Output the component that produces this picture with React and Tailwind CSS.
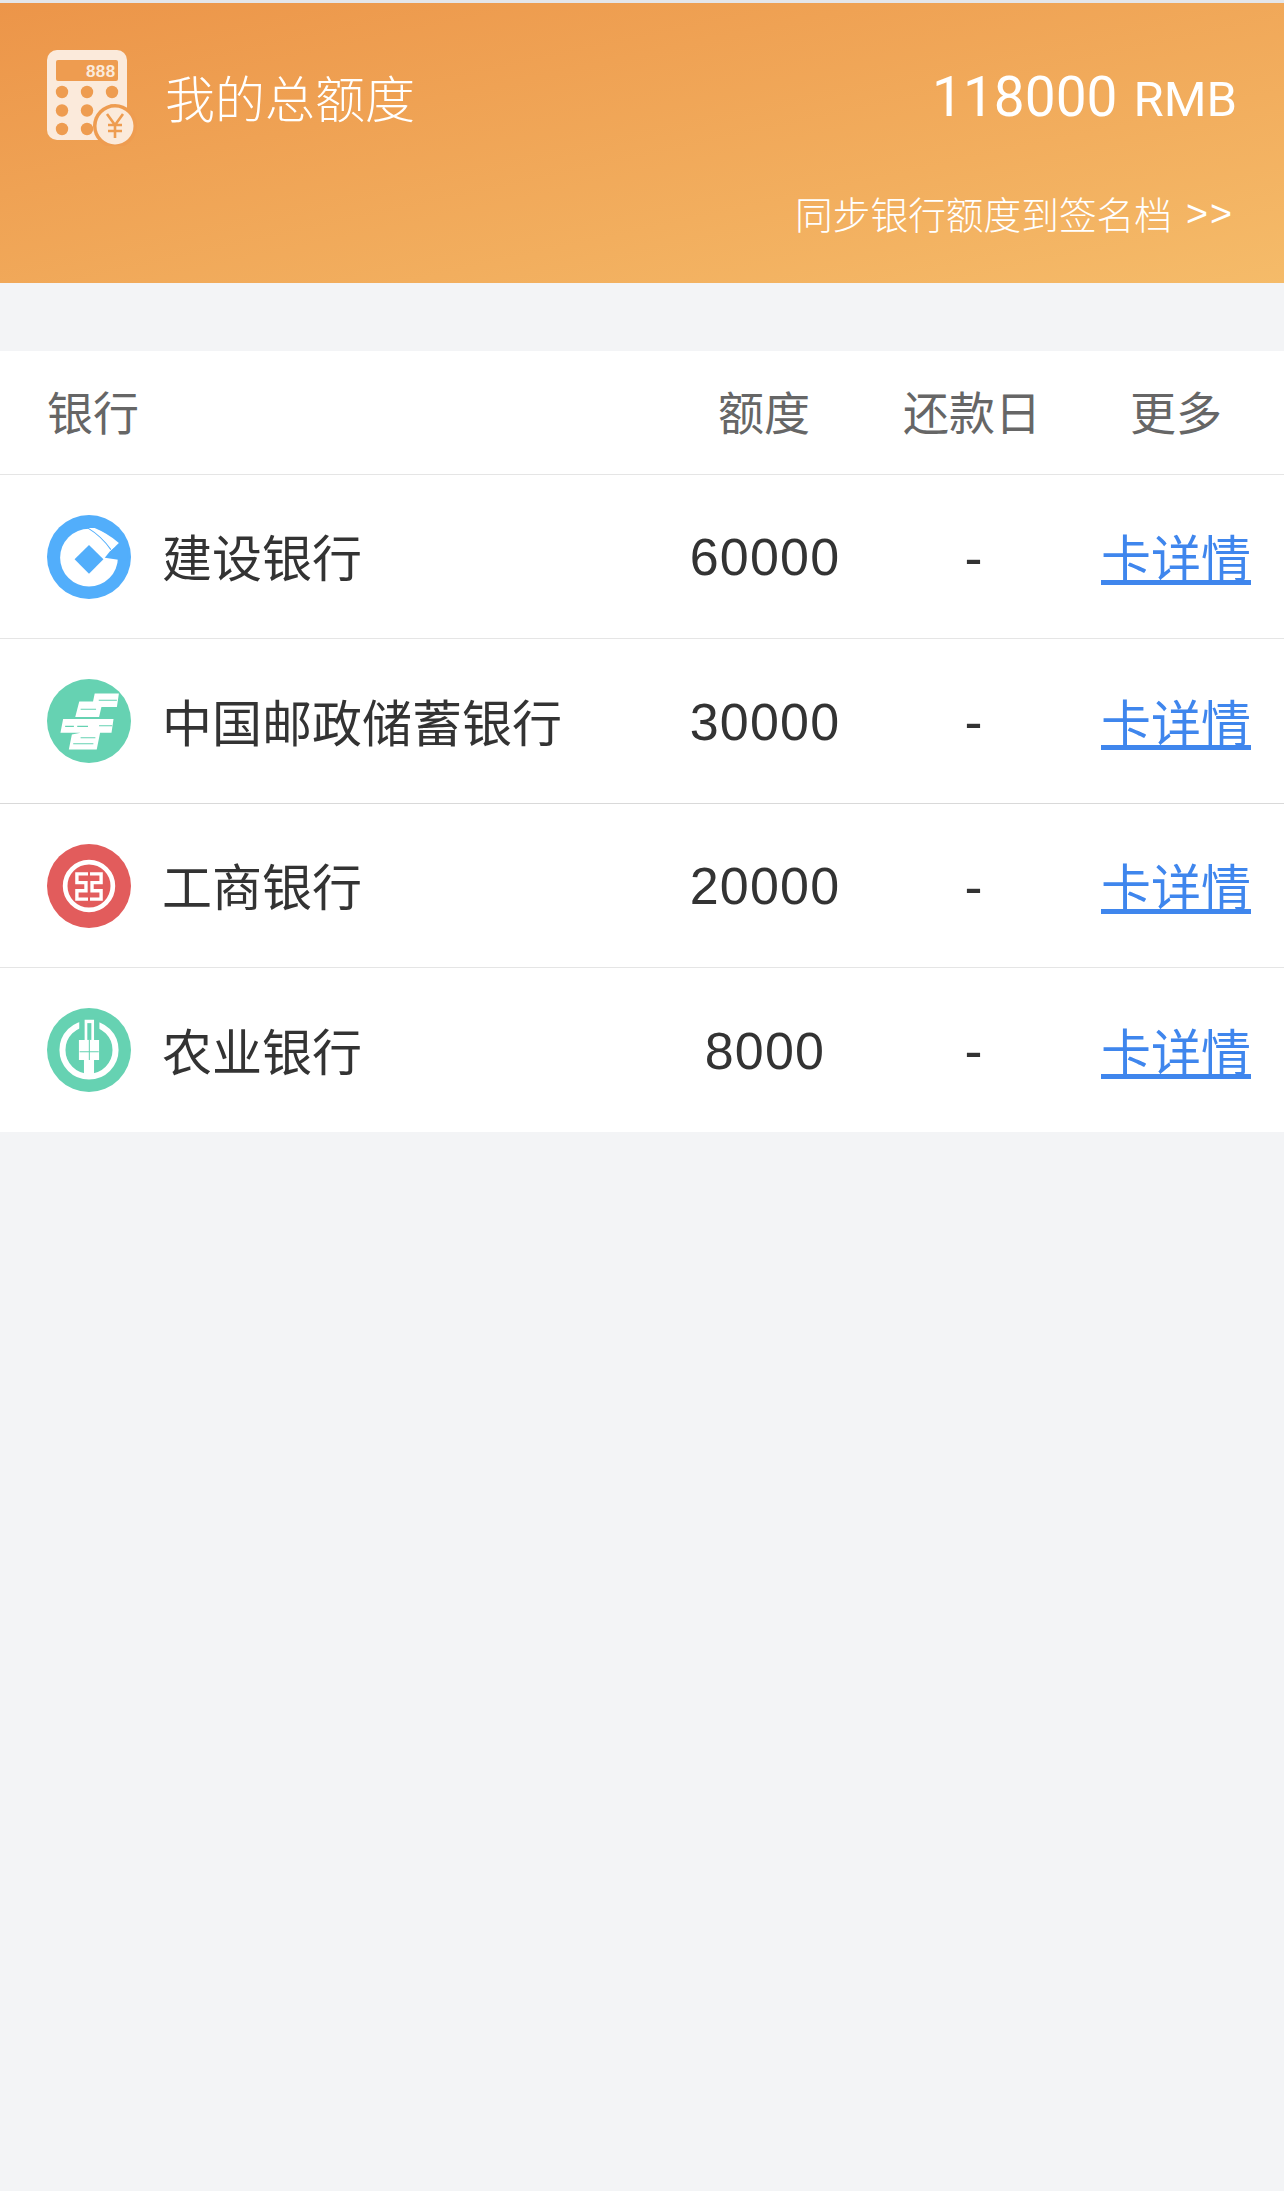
const cjk = { fontFamily: '"Noto Sans CJK SC", sans-serif' };
const num = { fontFamily: '"Liberation Sans", "Noto Sans CJK SC", sans-serif' };

function CalcIcon() {
  return (
    <svg width="90" height="96" viewBox="0 0 90 96" className="shrink-0">
      <rect x="0" y="0" width="80" height="90" rx="10" fill="#fbeadb" />
      <rect x="9" y="10" width="62" height="21" rx="2" fill="#ee9c50" />
      <text x="39" y="27" fill="#fbeadb" fontSize="17" fontFamily="Liberation Sans" fontWeight="700" letterSpacing="0.4">888</text>
      {[0, 1, 2].flatMap((r) =>
        [0, 1, 2].map((c) => (
          <circle key={`${r}-${c}`} cx={15 + c * 25} cy={42 + r * 18.5} r="6.2" fill="#ee9c50" />
        ))
      )}
      <circle cx="68" cy="76" r="22" fill="#ee9c50" />
      <circle cx="68" cy="76" r="18.5" fill="#fbeadb" />
      <path d="M60 64l8 11 8-11M61 75h14M61 81h14M68 75v13" fill="none" stroke="#ee9c50" strokeWidth="2.6" />
    </svg>
  );
}

function Disc({ fill, cy = 170, children }) {
  return (
    <svg width="84" height="84" viewBox={`50 ${cy - 125} 250 250`}>
      <circle cx="175" cy={cy} r="125" fill={fill} />
      {children}
    </svg>
  );
}

function CcbIcon() {
  const b = '#52aefb';
  return (
    <Disc fill={b}>
      <circle cx="175" cy="172" r="86" fill="#fff" />
      <path d="M238 152 L264 128 L290 128 L290 180 L262 178 L222 172 Z" fill={b} />
      <path d="M172 84 L192 84 Q230 100 264 128 L238 152 Z" fill="#fff" />
      <path d="M172 84 Q212 108 240 148" fill="none" stroke={b} strokeWidth="3" />
      <path d="M175 134 L218 177 L175 220 L132 177 Z" fill={b} />
    </Disc>
  );
}

function PsbcIcon() {
  const g = '#66d2b2';
  return (
    <Disc fill={g}>
      <path d="M192 88 L264 88 L258 128 L212 128 L205 158 L134 158 L146 112 L187 112 Z" fill="#fff" />
      <path d="M98 164 L248 164 L242 205 L208 205 L198 255 L115 255 L124 210 L150 205 L90 205 Z" fill="#fff" />
      <path d="M204 108 L258 108 M150 135 L196 135 M104 186 L130 186 M140 186 L172 186 M205 184 L244 184 M128 238 L188 238 M150 220 L194 220" fill="none" stroke={g} strokeWidth="3" />
    </Disc>
  );
}

function IcbcIcon() {
  const w = '#fff';
  return (
    <Disc fill="#e25c5c" cy={167}>
      <circle cx="175" cy="167" r="71" fill="none" stroke={w} strokeWidth="14" />
      <path
        d="M172 131 H139 V157 H166 V181 H139 V206 H172 M178 131 H211 V157 H184 V181 H211 V206 H178"
        fill="none"
        stroke={w}
        strokeWidth="10"
      />
    </Disc>
  );
}

function AbcIcon() {
  const g = '#66d2b2';
  return (
    <Disc fill={g} cy={165}>
      <circle cx="175" cy="165" r="79" fill="none" stroke="#fff" strokeWidth="18" />
      <rect x="146" y="70" width="60" height="35" fill={g} />
      <path d="M162 75 H190 V135 H205 V195 H190 V240 H160 V195 H145 V135 H162 Z" fill="#fff" />
      <rect x="170" y="85" width="12" height="50" fill={g} />
      <path d="M147 170 H204 M176 135 V195" stroke={g} strokeWidth="3" />
    </Disc>
  );
}

const rows = [
  { icon: <CcbIcon />, name: '建设银行', amount: '60000', h: 'h-[164px] border-b border-[#e5e5e5]' },
  { icon: <PsbcIcon />, name: '中国邮政储蓄银行', amount: '30000', h: 'h-[165px] border-b border-[#d9d9d9]' },
  { icon: <IcbcIcon />, name: '工商银行', amount: '20000', h: 'h-[164px] border-b border-[#e5e5e5]' },
  { icon: <AbcIcon />, name: '农业银行', amount: '8000', h: 'h-[164px]' },
];

const grid = 'grid grid-cols-[613px_208px_208px_200px] items-center pl-[47px]';

export default function App() {
  return (
    <div className="w-[1284px] h-[2191px] bg-[#f3f4f6] overflow-hidden" style={cjk}>
      <div className="h-[3px] bg-[#e4e6ea]" />
      <div className="h-[280px] bg-[linear-gradient(to_bottom_right,#ec9549_0%,#f5bb69_100%)] text-white pt-[47px] pl-[47px] pr-[47px]">
        <div className="flex items-center justify-between h-[96px]">
          <div className="flex items-center gap-[28px]">
            <CalcIcon />
            <span className="text-[50px] leading-none font-light -mt-[4px]">我的总额度</span>
          </div>
          <div className="flex items-baseline gap-[16px] mt-[-1px]" style={{ fontFamily: 'Roboto, sans-serif' }}>
            <span className="text-[55px] leading-none font-normal">118000</span>
            <span className="text-[49px] leading-none font-normal">RMB</span>
          </div>
        </div>
        <div className="flex justify-end items-center gap-[14px] mt-[39px] text-[37.7px] leading-[56px] font-light pr-[3px]">
          <span>同步银行额度到签名档</span>
          <span className="tracking-[2px]" style={num}>&gt;&gt;</span>
        </div>
      </div>
      <div className="mt-[68px] bg-white">
        <div className={`${grid} h-[124px] border-b border-[#e5e5e5] text-[46px] leading-none text-[#666] font-normal`}>
          <span className="-mt-[6px]">银行</span>
          <span className="text-center -mt-[6px]">额度</span>
          <span className="text-center -mt-[6px]">还款日</span>
          <span className="text-center -mt-[6px]">更多</span>
        </div>
        {rows.map((r) => (
          <div key={r.name} className={`${grid} ${r.h}`}>
            <div className="flex items-center gap-[31px]">
              {r.icon}
              <span className="text-[50px] leading-none text-[#333] -mt-[3px]">{r.name}</span>
            </div>
            <span className="text-center text-[52px] leading-none text-[#333] tracking-[1.2px] mt-[1px] pl-[2px]" style={num}>{r.amount}</span>
            <span className="text-center text-[54px] leading-none text-[#333] pl-[3px]" style={num}>-</span>
            <a className="text-center text-[50px] leading-none text-[#3f86ed] underline -mt-[3px]">卡详情</a>
          </div>
        ))}
      </div>
    </div>
  );
}
